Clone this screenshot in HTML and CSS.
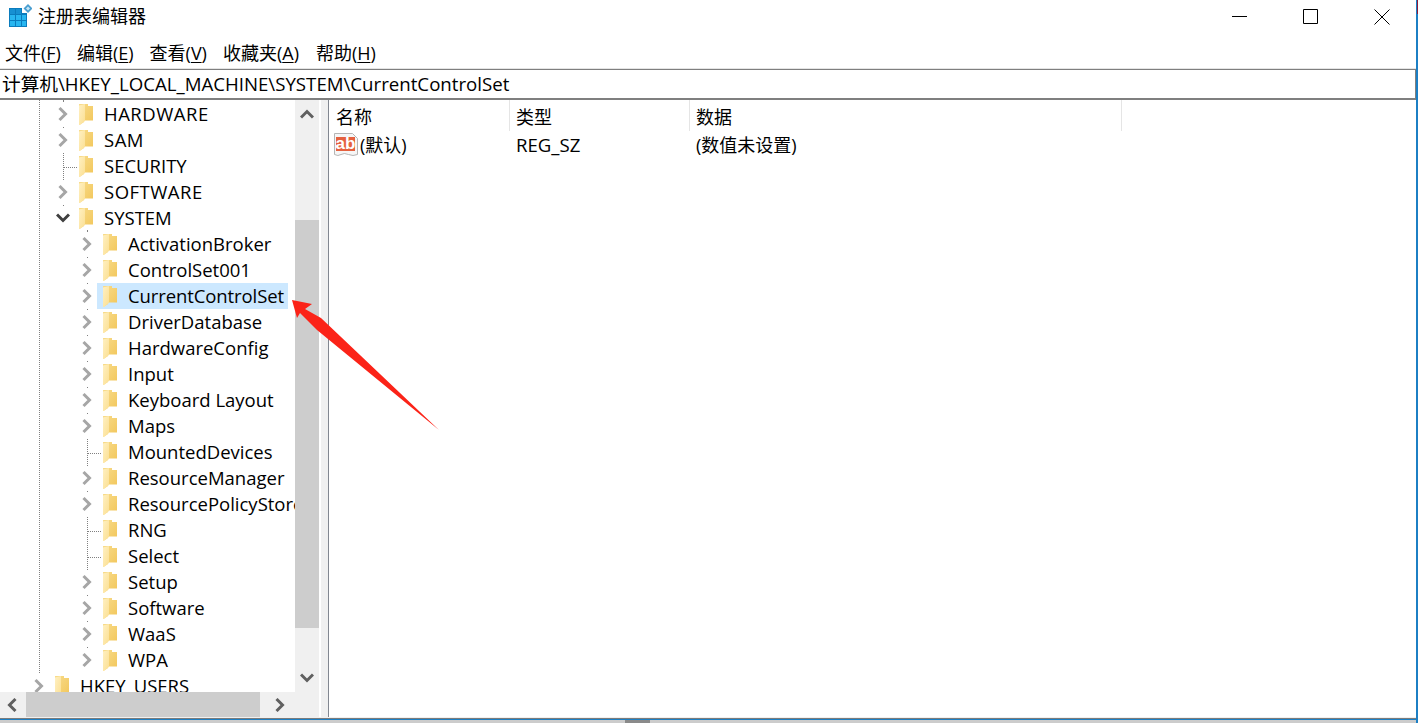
FILE: index.html
```html
<!DOCTYPE html>
<html lang="zh-CN">
<head>
<meta charset="utf-8">
<title>注册表编辑器</title>
<link rel="stylesheet" href="styles.css">
</head>
<body>
<svg class="defs" width="0" height="0" aria-hidden="true">
  <defs>
    <linearGradient id="fback" x1="0" y1="0" x2="1" y2="1"><stop offset="0" stop-color="#f8dc8c"/><stop offset="1" stop-color="#f2c659"/></linearGradient>
    <linearGradient id="ffront" x1="0" y1="0" x2="1" y2="1"><stop offset="0" stop-color="#fff0c2"/><stop offset="1" stop-color="#fbdf92"/></linearGradient>
    <symbol id="folder" viewBox="0 0 14 21">
      <path d="M0 0H9V2H14V16.500H5V18L0 21Z" fill="url(#fback)"/>
      <path d="M0 1.500 6 0V17L1 21H0Z" fill="url(#ffront)"/>
    </symbol>
    <symbol id="chev-r" viewBox="0 0 10 14">
      <path d="M1.500 1 7.500 7 1.500 13" fill="none" stroke="#a6a6a6" stroke-width="3"/>
    </symbol>
    <symbol id="chev-d" viewBox="0 0 14 10">
      <path d="M1 1.500 7 7.500 13 1.500" fill="none" stroke="#404040" stroke-width="3"/>
    </symbol>
    <symbol id="sb-up" viewBox="0 0 14 10">
      <path d="M1 8.500 7 2.500 13 8.500" fill="none" stroke="#606060" stroke-width="3"/>
    </symbol>
    <symbol id="sb-down" viewBox="0 0 14 10">
      <path d="M1 1.500 7 7.500 13 1.500" fill="none" stroke="#606060" stroke-width="3"/>
    </symbol>
    <symbol id="sb-left" viewBox="0 0 10 14">
      <path d="M8.500 1 2.500 7 8.500 13" fill="none" stroke="#606060" stroke-width="3"/>
    </symbol>
    <symbol id="sb-right" viewBox="0 0 10 14">
      <path d="M1.500 1 7.500 7 1.500 13" fill="none" stroke="#606060" stroke-width="3"/>
    </symbol>
  </defs>
</svg>

<div class="window">
  <header class="titlebar">
    <svg class="app-icon" viewBox="0 0 23 23" aria-hidden="true">
      <path d="M0 4H13V9H18V23H0Z" fill="#0b7cbd"/>
      <path d="M1 5H6V10H1ZM7 5H12V10H7Z" fill="#1790d2"/>
      <path d="M1 11H6V16H1ZM7 11H12V16H7ZM13 11H17V16H13ZM1 17H6V22H1ZM7 17H12V22H7ZM13 17H17V22H13Z" fill="#28b6f0"/>
      <path d="M19 0 23.500 4.500 19 9 14.500 4.500Z" fill="#4a9ed0"/>
      <path d="M19 2.500 21 4.500 19 6.500 17 4.500Z" fill="#c6e6f6"/>
    </svg>
    <span class="title-text">注册表编辑器</span>
    <div class="win-controls">
      <svg class="win-btn" viewBox="0 0 16 16" aria-hidden="true"><path d="M0 7.500H15" stroke="#000" fill="none"/></svg>
      <svg class="win-btn" viewBox="0 0 16 16" aria-hidden="true"><path d="M.5 .5H14.500V14.500H.5Z" stroke="#000" fill="none"/></svg>
      <svg class="win-btn" viewBox="0 0 16 16" aria-hidden="true"><path d="M.5 .5 15.500 15.500M15.500 .5 .5 15.500" stroke="#000" fill="none"/></svg>
    </div>
  </header>

  <nav class="menubar">
    <span class="menu-item">文件(<u>F</u>)</span>
    <span class="menu-item">编辑(<u>E</u>)</span>
    <span class="menu-item">查看(<u>V</u>)</span>
    <span class="menu-item">收藏夹(<u>A</u>)</span>
    <span class="menu-item">帮助(<u>H</u>)</span>
  </nav>

  <div class="address">计算机\HKEY_LOCAL_MACHINE\SYSTEM\CurrentControlSet</div>

  <main class="panes">
    <section class="tree-pane">
      <div class="tree-top">
        <div class="tree-view">
          <i class="line line-root"></i>
          <i class="line line-l1"></i>
          <i class="line line-l2"></i>
          <i class="hline hline-security"></i>
          <i class="hline hline-mounted"></i>
          <i class="hline hline-rng"></i>
          <i class="hline hline-select"></i>
          <ul class="tree">
            <li class="node d1"><svg class="tw"><use href="#chev-r"/></svg><svg class="fo"><use href="#folder"/></svg><span class="lbl caps">HARDWARE</span></li>
            <li class="node d1"><svg class="tw"><use href="#chev-r"/></svg><svg class="fo"><use href="#folder"/></svg><span class="lbl caps">SAM</span></li>
            <li class="node d1"><span class="tw leaf"></span><svg class="fo"><use href="#folder"/></svg><span class="lbl">SECURITY</span></li>
            <li class="node d1"><svg class="tw"><use href="#chev-r"/></svg><svg class="fo"><use href="#folder"/></svg><span class="lbl caps">SOFTWARE</span></li>
            <li class="node d1"><svg class="tw tw-open"><use href="#chev-d"/></svg><svg class="fo"><use href="#folder"/></svg><span class="lbl">SYSTEM</span></li>
            <li class="node d2"><svg class="tw"><use href="#chev-r"/></svg><svg class="fo"><use href="#folder"/></svg><span class="lbl">ActivationBroker</span></li>
            <li class="node d2"><svg class="tw"><use href="#chev-r"/></svg><svg class="fo"><use href="#folder"/></svg><span class="lbl">ControlSet001</span></li>
            <li class="node d2"><svg class="tw"><use href="#chev-r"/></svg><span class="sel"><svg class="fo"><use href="#folder"/></svg><span class="lbl">CurrentControlSet</span></span></li>
            <li class="node d2"><svg class="tw"><use href="#chev-r"/></svg><svg class="fo"><use href="#folder"/></svg><span class="lbl">DriverDatabase</span></li>
            <li class="node d2"><svg class="tw"><use href="#chev-r"/></svg><svg class="fo"><use href="#folder"/></svg><span class="lbl">HardwareConfig</span></li>
            <li class="node d2"><svg class="tw"><use href="#chev-r"/></svg><svg class="fo"><use href="#folder"/></svg><span class="lbl">Input</span></li>
            <li class="node d2"><svg class="tw"><use href="#chev-r"/></svg><svg class="fo"><use href="#folder"/></svg><span class="lbl">Keyboard Layout</span></li>
            <li class="node d2"><svg class="tw"><use href="#chev-r"/></svg><svg class="fo"><use href="#folder"/></svg><span class="lbl">Maps</span></li>
            <li class="node d2"><span class="tw leaf"></span><svg class="fo"><use href="#folder"/></svg><span class="lbl">MountedDevices</span></li>
            <li class="node d2"><svg class="tw"><use href="#chev-r"/></svg><svg class="fo"><use href="#folder"/></svg><span class="lbl">ResourceManager</span></li>
            <li class="node d2"><svg class="tw"><use href="#chev-r"/></svg><svg class="fo"><use href="#folder"/></svg><span class="lbl">ResourcePolicyStore</span></li>
            <li class="node d2"><span class="tw leaf"></span><svg class="fo"><use href="#folder"/></svg><span class="lbl">RNG</span></li>
            <li class="node d2"><span class="tw leaf"></span><svg class="fo"><use href="#folder"/></svg><span class="lbl">Select</span></li>
            <li class="node d2"><svg class="tw"><use href="#chev-r"/></svg><svg class="fo"><use href="#folder"/></svg><span class="lbl">Setup</span></li>
            <li class="node d2"><svg class="tw"><use href="#chev-r"/></svg><svg class="fo"><use href="#folder"/></svg><span class="lbl">Software</span></li>
            <li class="node d2"><svg class="tw"><use href="#chev-r"/></svg><svg class="fo"><use href="#folder"/></svg><span class="lbl">WaaS</span></li>
            <li class="node d2"><svg class="tw"><use href="#chev-r"/></svg><svg class="fo"><use href="#folder"/></svg><span class="lbl">WPA</span></li>
            <li class="node d0"><svg class="tw"><use href="#chev-r"/></svg><svg class="fo"><use href="#folder"/></svg><span class="lbl">HKEY_USERS</span></li>
          </ul>
        </div>
        <div class="vscroll">
          <svg class="sb-arrow-v"><use href="#sb-up"/></svg>
          <div class="vthumb"></div>
          <svg class="sb-arrow-v"><use href="#sb-down"/></svg>
        </div>
      </div>
      <div class="hscroll">
        <svg class="sb-arrow-h"><use href="#sb-left"/></svg>
        <div class="hthumb"></div>
        <svg class="sb-arrow-h"><use href="#sb-right"/></svg>
      </div>
    </section>

    <div class="splitter"></div>

    <section class="list-pane">
      <div class="list-head">
        <span class="col col-name">名称</span>
        <span class="col col-type">类型</span>
        <span class="col col-data">数据</span>
      </div>
      <div class="list-row">
        <span class="cell col-name name-cell">
          <svg class="ab-icon" viewBox="0 0 24 24" aria-hidden="true">
            <path d="M.5 .5H18.500L23.500 5.500V21.500Q19 23.500 14.500 21.500T7 21.500 .5 21.500Z" fill="#f6f6f6" stroke="#b5b5b5"/>
            <path d="M2 4H21V18H2Z" fill="#e5613f"/>
            <text class="ab-text" x="11.500" y="16">ab</text>
          </svg>
          <span class="name-text">(默认)</span>
        </span>
        <span class="cell col-type type-cell">REG_SZ</span>
        <span class="cell col-data">(数值未设置)</span>
      </div>
    </section>
  </main>

  <div class="statusline"><div class="status-thumb"></div></div>

  <div class="corner"></div>
  <svg class="arrow" viewBox="0 0 160 150" aria-hidden="true">
    <path d="M1 0 21 4 14 9 30 18 148 130 26 30 9 13 6 18Z" fill="#fb2318"/>
  </svg>
</div>
</body>
</html>
```
FILE: styles.css
```css
* { box-sizing: border-box; }
html, body { margin: 0; padding: 0; height: 100%; background: #fff; }
body {
  font-family: "Open Sans", "Noto Sans CJK SC", sans-serif;
  font-size: 18px;
  color: #000;
  overflow: hidden;
}
.defs { display: block; height: 0; }
.window {
  position: relative;
  width: 1418px;
  height: 723px;
  display: flex;
  flex-direction: column;
  background: #ccc;
  border-right: 2px solid #1c7fc4;
}
.corner {
  position: absolute;
  right: -2px;
  top: 0;
  width: 1px;
  height: 14px;
  background: #8b1a3a;
}
.titlebar {
  height: 32px;
  display: flex;
  align-items: center;
  padding-left: 9px;
  background: #fff;
}
.app-icon { width: 23px; height: 23px; margin-top: -1px; }
.title-text { margin-left: 6px; font-size: 18px; line-height: 32px; }
.win-controls {
  margin-left: auto;
  display: flex;
  gap: 55px;
  padding-right: 26px;
  margin-top: 1px;
}
.win-btn { width: 16px; height: 16px; display: block; }
.menubar {
  height: 37px;
  display: flex;
  gap: 16px;
  padding: 7px 0 0 5px;
  background: #fff;
  line-height: 28px;
}
.menubar u { text-underline-offset: 2px; }
.menu-item { white-space: nowrap; }
.menu-item:last-child { margin-left: 1px; }
.address {
  height: 31px;
  border: 2px solid #7f7f7f;
  border-width: 1px 1px 2px 0;
  padding-left: 2px;
  line-height: 28px;
  font-size: 18.660px;
  background: #fff;
  box-shadow: 0 -1px 0 #e4e4e4;
  white-space: nowrap;
}
.panes {
  flex: 1;
  display: flex;
  min-height: 0;
  background: #fff;
}
.tree-pane {
  width: 319px;
  display: flex;
  flex-direction: column;
  flex: none;
}
.tree-top { flex: 1; display: flex; min-height: 0; }
.tree-view { position: relative; flex: 1; overflow: hidden; background: #fff; }
.tree {
  position: relative;
  list-style: none;
  margin: 0;
  padding: 1px 0 0;
  width: 295px;
  font-size: 18.500px;
}
.node {
  height: 26px;
  display: flex;
  align-items: center;
  white-space: nowrap;
}
.d0 { padding-left: 34px; }
.d1 { padding-left: 58px; }
.d2 { padding-left: 82px; }
.tw { width: 10px; height: 24px; flex: none; display: block; margin-right: 11px; background: #fff; }
.leaf { background: transparent; }
.tw-open { width: 14px; margin-left: -2px; margin-right: 9px; }
.fo { width: 14px; height: 21px; flex: none; display: block; margin-right: 11px; }
.lbl { line-height: 26px; }
.caps { letter-spacing: .5px; }
.sel {
  display: flex;
  align-items: center;
  height: 26px;
  width: 191px;
  flex: none;
  margin-left: -6px;
  padding-left: 6px;
  background: #cce8ff;
  letter-spacing: -.1px;
}
.line, .hline { position: absolute; display: block; }
.line { width: 0; border-left: 1px dotted #808080; }
.hline { height: 0; width: 13px; border-top: 1px dotted #808080; }
.line-root { left: 39px; top: 0; height: 573px; }
.line-l1 { left: 63px; top: 0; height: 106px; }
.line-l2 { left: 87px; top: 130px; height: 418px; }
.hline-security { left: 64px; top: 67px; }
.hline-mounted { left: 88px; top: 353px; }
.hline-rng { left: 88px; top: 431px; }
.hline-select { left: 88px; top: 457px; }
.vscroll {
  width: 24px;
  flex: none;
  background: #f0f0f0;
  display: flex;
  flex-direction: column;
  align-items: center;
  padding-top: 9px;
  padding-bottom: 9px;
}
.sb-arrow-v { width: 14px; height: 10px; display: block; flex: none; }
.vthumb {
  width: 24px;
  height: 408px;
  background: #cdcdcd;
  margin: 101px 0 45px;
  flex: none;
}
.hscroll {
  height: 25px;
  flex: none;
  display: flex;
  align-items: center;
  background: #f0f0f0;
  padding-left: 7px;
}
.sb-arrow-h { width: 10px; height: 14px; display: block; flex: none; }
.hthumb { width: 234px; height: 25px; background: #cdcdcd; margin: 0 15px 0 9px; flex: none; }
.splitter {
  width: 10px;
  flex: none;
  background: #f0f0f0;
  border-left: 2px solid #fff;
  border-right: 1px solid #828790;
}
.list-pane { flex: 1; background: #fff; }
.list-head { display: flex; height: 31px; }
.col { line-height: 28px; border-right: 1px solid #e5e5e5; height: 31px; padding: 3px 0 0 6px; }
.col-name { width: 181px; }
.list-head .col-name { padding-left: 7px; }
.col-type { width: 180px; }
.col-data { width: 432px; }
.list-row { display: flex; height: 26px; align-items: center; margin-top: 1px; }
.cell { display: block; padding-left: 6px; line-height: 26px; }
.type-cell { font-size: 18.600px; }
.name-cell { display: flex; align-items: center; padding-left: 5px; }
.ab-icon { width: 24px; height: 24px; flex: none; }
.ab-text { font-family: "Liberation Sans", sans-serif; font-size: 17px; font-weight: bold; fill: #fff; text-anchor: middle; }
.name-text { margin-left: 2px; }
.statusline {
  height: 6px;
  flex: none;
  padding-top: 3px;
  background: #ccc;
  box-shadow: inset 0 1px 0 #f0f0f0, inset 0 2px 0 #7b7b7b, inset 0 3px 0 #1c7fc4;
}
.status-thumb { width: 25px; height: 3px; margin-left: 625px; background: #8a8a8a; }
.arrow {
  position: absolute;
  left: 291px;
  top: 300px;
  width: 160px;
  height: 150px;
}
```
